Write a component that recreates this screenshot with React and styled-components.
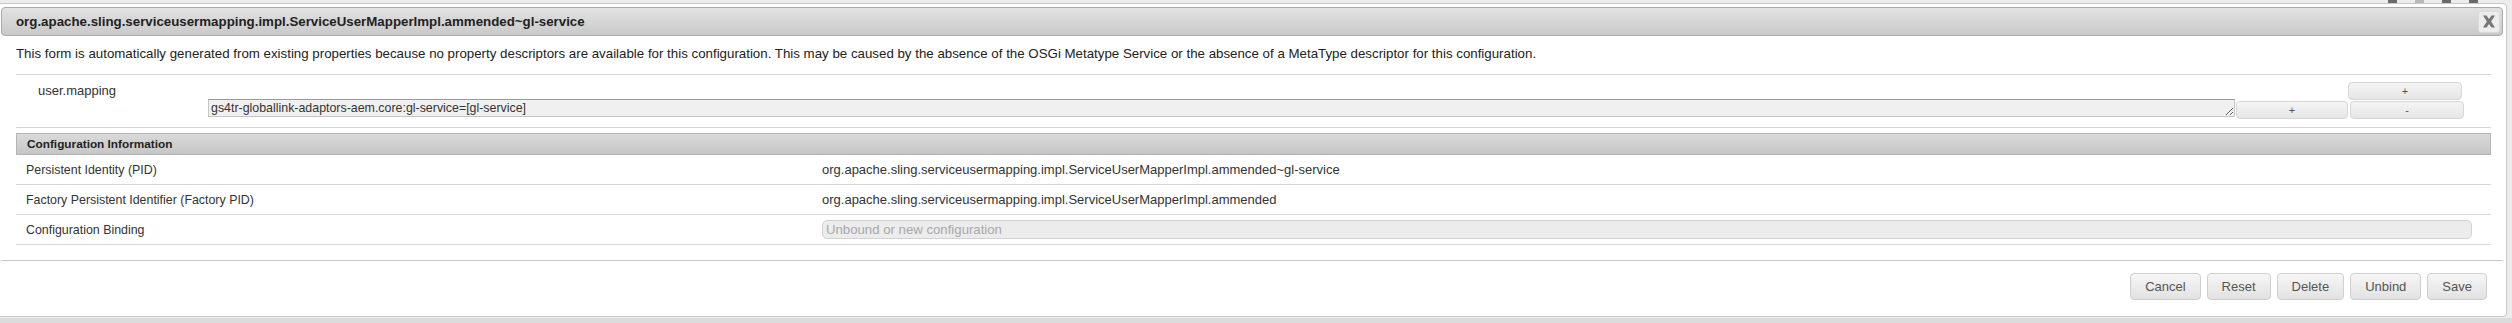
import styled, { createGlobalStyle } from "styled-components";

const GlobalStyle = createGlobalStyle`
  html, body {
    margin: 0;
    padding: 0;
  }
  body {
    background: #e6e6e6;
    font-family: "Liberation Sans", Arial, sans-serif;
    color: #222;
  }
`;

const Page = styled.div`
  width: 2512px;
  height: 323px;
  overflow: hidden;
  display: flex;
  flex-direction: column;
  background: #ececec;
`;

const TopStrip = styled.div`
  height: 3px;
  flex: none;
  display: flex;
  justify-content: flex-end;
  align-items: flex-end;
  gap: 18px;
  padding-right: 34px;
`;

const StripIcon = styled.span`
  width: 9px;
  height: 3px;
  background: ${(p) => (p.$light ? "#b8b8b8" : "#6a6a6a")};
`;

const Dialog = styled.div`
  flex: none;
  width: 2510px;
  margin-left: -3px;
  box-sizing: border-box;
  background: #fff;
  border: 1px solid #c8c8c8;
  border-radius: 4px;
  padding: 3px;
  display: flex;
  flex-direction: column;
`;

const TitleBar = styled.div`
  height: 29px;
  box-sizing: border-box;
  border: 1px solid #a8a8a8;
  border-radius: 4px;
  background: linear-gradient(#e2e2e2, #c9c9c9);
  display: flex;
  align-items: center;
  justify-content: space-between;
  padding: 0 2px 0 14px;
`;

const Title = styled.span`
  font-size: 13.3px;
  font-weight: bold;
  color: #222;
`;

const CloseButton = styled.button`
  width: 22px;
  height: 22px;
  padding: 0;
  border: 1px solid #dadada;
  border-radius: 3px;
  background: #ededed;
  display: flex;
  align-items: center;
  justify-content: center;
`;

const Content = styled.div`
  padding: 0 12px 0 15px;
`;

const Description = styled.p`
  margin: 0;
  padding: 10px 0 12px;
  font-size: 13.3px;
  line-height: 16px;
  color: #222;
  border-bottom: 1px solid #d6d6d6;
`;

const PropertyBlock = styled.div`
  padding: 7px 27px 8px 22px;
  border-bottom: 1px solid #d6d6d6;
  display: flex;
  flex-direction: column;
`;

const TopLine = styled.div`
  display: flex;
  align-items: center;
  justify-content: space-between;
  height: 17px;
`;

const Label = styled.span`
  font-size: 13px;
  color: #333;
`;

const ValueLine = styled.div`
  display: flex;
  align-items: flex-start;
  margin-left: 170px;
`;

const TextArea = styled.textarea`
  flex: 1;
  height: 18px;
  box-sizing: border-box;
  margin: 0;
  padding: 1px 2px;
  font-family: "Liberation Sans", Arial, sans-serif;
  font-size: 12.4px;
  line-height: 14px;
  color: #333;
  background: #f0f0f0;
  border: 1px solid #c4c4c4;
  border-top-color: #9a9a9a;
  overflow: hidden;
  resize: both;
`;

const SmallButton = styled.button`
  width: ${(p) => p.$w}px;
  height: 18px;
  margin: ${(p) => p.$m || "0"};
  padding: 0;
  box-sizing: border-box;
  border: 1px solid #d6d6d6;
  border-radius: 4px;
  background: linear-gradient(#f4f4f4, #e6e6e6);
  font-family: "Liberation Sans", Arial, sans-serif;
  font-size: 11px;
  color: #555;
  line-height: 14px;
`;

const SectionHeader = styled.div`
  margin-top: 5px;
  height: 22px;
  box-sizing: border-box;
  border: 1px solid #b4b4b4;
  background: linear-gradient(#dadada, #c6c6c6);
  display: flex;
  align-items: center;
  padding-left: 10px;
  font-size: 11.8px;
  font-weight: bold;
  color: #222;
`;

const InfoRow = styled.div`
  display: grid;
  grid-template-columns: 806px 1fr;
  align-items: center;
  height: 30px;
  padding: 0 19px 0 10px;
  border-bottom: 1px solid #d6d6d6;
  font-size: 12.4px;
  color: #333;
  box-sizing: border-box;
`;

const Value = styled.span`
  margin-left: -10px;
  font-size: 13px;
`;

const BindingSelect = styled.div`
  margin-left: -10px;
  height: 19px;
  box-sizing: border-box;
  border: 1px solid #d2d2d2;
  border-radius: 5px;
  background: #ececec;
  display: flex;
  align-items: center;
  padding-left: 3px;
  font-size: 13.2px;
  color: #a8a8a8;
`;

const Footer = styled.div`
  margin-top: 15px;
  border-top: 1px solid #c6c6c6;
  padding: 12px 16px 13px 0;
  display: flex;
  justify-content: flex-end;
  gap: 6px;
`;

const ActionButton = styled.button`
  height: 27px;
  padding: 0 14px;
  border: 1px solid #cfcfcf;
  border-radius: 4px;
  background: linear-gradient(#f6f6f6, #e2e2e2);
  font-family: "Liberation Sans", Arial, sans-serif;
  font-size: 13px;
  color: #555;
`;

const BottomStrip = styled.div`
  flex: 1;
  background: #dcdcdc;
  border-top: 1px solid #ededed;
`;

const CloseIcon = () => (
  <svg width="14" height="13" viewBox="0 0 14 13">
    <path
      d="M1 0.5 L4.6 0.5 L7 4 L9.4 0.5 L13 0.5 L9.1 6.5 L13 12.5 L9.4 12.5 L7 9 L4.6 12.5 L1 12.5 L4.9 6.5 Z"
      fill="#777"
    />
  </svg>
);

const rows = [
  ["Persistent Identity (PID)", "org.apache.sling.serviceusermapping.impl.ServiceUserMapperImpl.ammended~gl-service"],
  ["Factory Persistent Identifier (Factory PID)", "org.apache.sling.serviceusermapping.impl.ServiceUserMapperImpl.ammended"],
];

export default function App() {
  return (
    <Page>
      <GlobalStyle />
      <TopStrip>
        <StripIcon />
        <StripIcon $light />
        <StripIcon />
        <StripIcon />
      </TopStrip>
      <Dialog>
        <TitleBar>
          <Title>org.apache.sling.serviceusermapping.impl.ServiceUserMapperImpl.ammended~gl-service</Title>
          <CloseButton>
            <CloseIcon />
          </CloseButton>
        </TitleBar>
        <Content>
          <Description>
            This form is automatically generated from existing properties because no property descriptors are
            available for this configuration. This may be caused by the absence of the OSGi Metatype Service or the
            absence of a MetaType descriptor for this configuration.
          </Description>
          <PropertyBlock>
            <TopLine>
              <Label>user.mapping</Label>
              <SmallButton $w={114} $m="0 2px 0 0">+</SmallButton>
            </TopLine>
            <ValueLine>
              <TextArea rows={1} defaultValue="gs4tr-globallink-adaptors-aem.core:gl-service=[gl-service]" />
              <SmallButton $w={112} $m="2px 0 0 1px">+</SmallButton>
              <SmallButton $w={114} $m="2px 0 0 2px">-</SmallButton>
            </ValueLine>
          </PropertyBlock>
          <SectionHeader>Configuration Information</SectionHeader>
          {rows.map(([label, value]) => (
            <InfoRow key={label}>
              <span>{label}</span>
              <Value>{value}</Value>
            </InfoRow>
          ))}
          <InfoRow>
            <span>Configuration Binding</span>
            <BindingSelect>Unbound or new configuration</BindingSelect>
          </InfoRow>
        </Content>
        <Footer>
          <ActionButton>Cancel</ActionButton>
          <ActionButton>Reset</ActionButton>
          <ActionButton>Delete</ActionButton>
          <ActionButton>Unbind</ActionButton>
          <ActionButton>Save</ActionButton>
        </Footer>
      </Dialog>
      <BottomStrip />
    </Page>
  );
}
